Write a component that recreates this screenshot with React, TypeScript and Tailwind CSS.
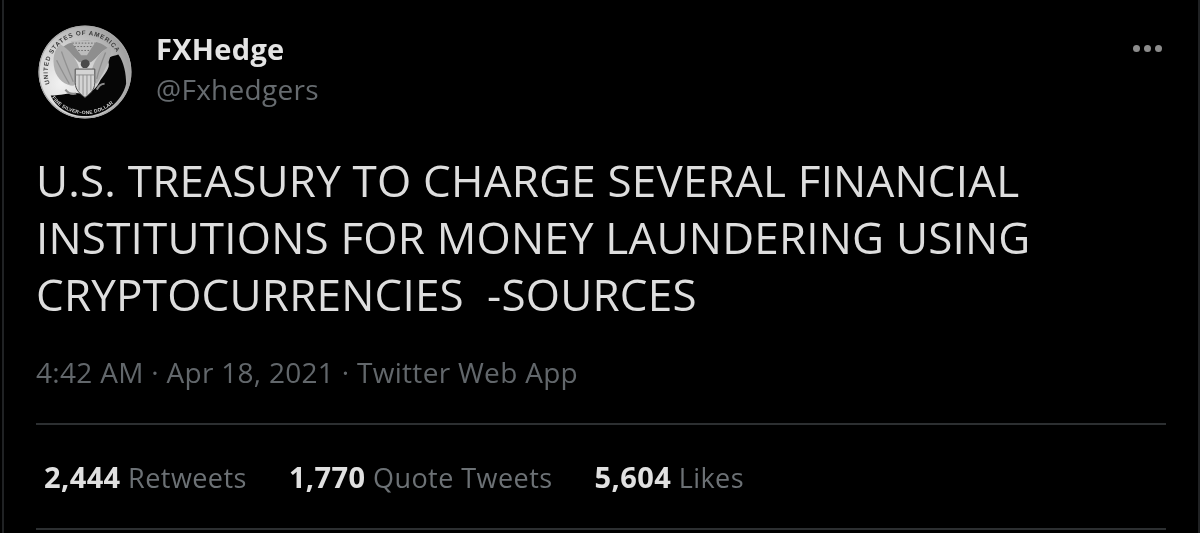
import React from "react";

function Coin() {
  return (
    <svg viewBox="0 0 96 96" className="w-[94px] h-[94px] shrink-0 blur-[0.5px]">
      <defs>
        <path id="topArc" d="M 13.5 64 A 38 38 0 1 1 82.5 64" />
        <path id="botArc" d="M 12.3 72 A 43 43 0 0 0 83.7 72" />
        <radialGradient id="field" cx="25%" cy="62%" r="75%">
          <stop offset="0%" stopColor="#f2f2f2" />
          <stop offset="55%" stopColor="#d0d0d0" />
          <stop offset="100%" stopColor="#a2a2a2" />
        </radialGradient>
      </defs>
      <circle cx="48" cy="48" r="47.5" fill="url(#field)" />
      {/* grey upper field behind the stars */}
      <path d="M24 24 C 32 14 60 12 72 24 C 66 24 60 34 54 38 H 42 C 36 32 30 26 24 24 Z" fill="#8e8e8e" />
      {/* black shadow sweeping over the coin */}
      <path d="M 82 30 C 76 32 70 32 72 38 C 74 44 68 50 64 56 C 60 64 56 70 44 70 C 34 68 26 72 13 72 C 18 84 32 93 48 93 C 68 93 86 78 90 60 C 90 50 88 38 82 30 Z" fill="#060606" />
      <circle cx="48" cy="48" r="46.8" fill="none" stroke="#a8a8a8" strokeWidth="1.1" />
      <text fontSize="6.4" fontWeight="700" fill="#3a3a3a" fontFamily="Liberation Sans, sans-serif" letterSpacing="0.8">
        <textPath href="#topArc" startOffset="4">UNITED STATES OF AMERICA</textPath>
      </text>
      <text fontSize="5" fontWeight="700" fill="#d6d6d6" fontFamily="Liberation Sans, sans-serif" letterSpacing="0.2">
        <textPath href="#botArc" startOffset="3">FINE SILVER~ONE DOLLAR</textPath>
      </text>
      {/* stars */}
      <path d="M33 16 H60 L55 23 L50 31 H44 L38 23 Z" fill="#bcbcbc" />
      <path d="M35 18.5 H58 M37 22 H56 M41 26 H53" stroke="#6a6a6a" strokeWidth="1" strokeDasharray="1.6 1.6" />
      {/* wings */}
      <path d="M17 46 C 14 34 17 24 23 20 C 31 24 39 34 42 44 C 44 54 40 60 36 62 C 28 62 20 56 17 46 Z" fill="#b0b0b0" />
      <path d="M24 27 C 27 36 31 46 36 58 M19 36 C 23 44 27 52 32 60" stroke="#919191" strokeWidth="1.3" fill="none" />
      <path d="M74 22 C 66 25 58 34 55 46 C 54 54 56 58 60 60 C 63 56 66 50 69 44 C 72 38 76 30 74 22 Z" fill="#aeaeae" />
      <path d="M69 28 C 65 38 62 46 60 55" stroke="#8c8c8c" strokeWidth="1.3" fill="none" />
      {/* head */}
      <path d="M44 38 C 45 35 50 34 52 37 C 54 40 52 42 50 44 L 46 44 C 44 42 43 41 44 38 Z" fill="#4a4a4a" />
      {/* shield */}
      <path d="M38 45 H58 V59 C 58 67 52 71 48 74 C 44 71 38 67 38 59 Z" fill="#d4d4d4" stroke="#4e4e4e" strokeWidth="1" />
      <path d="M38 51 H58 M42 51 V67 M46 51 V72 M50 51 V72 M54 51 V67" stroke="#8a8a8a" strokeWidth="0.9" />
      {/* talons and branch */}
      <path d="M28 66 C 31 70 35 71 39 70 M60 66 C 62 62 65 60 68 60" stroke="#8c8c8c" strokeWidth="2.2" fill="none" />
    </svg>
  );
}

function Stat({ n, label }: { n: string; label: string }) {
  return (
    <span className="whitespace-nowrap">
      <span className="font-bold text-[29px] tracking-[0.4px] text-[#e0e0e0]">{n}</span>
      <span className="text-[#6c7175] tracking-[0.45px]"> {label}</span>
    </span>
  );
}

export default function App() {
  return (
    <div
      className="relative w-[1200px] h-[533px] overflow-hidden bg-black pl-[36px] pr-[34px] pt-[25px]"
      style={{ fontFamily: '"Open Sans", "Noto Sans", sans-serif' }}
    >
      <div className="flex items-start h-[94px]">
        <div className="ml-[2px]">
          <Coin />
        </div>
        <div className="ml-[24px] flex flex-col blur-[0.4px]">
          <div className="text-[29px] leading-[36px] mt-[6px] font-bold text-[#e4e4e4] tracking-[0.3px]">FXHedge</div>
          <div className="text-[28px] leading-[36px] mt-[4px] text-[#666b6f] tracking-[0.3px]">@Fxhedgers</div>
        </div>
        <div className="ml-auto mr-[4px] mt-[20px] flex gap-[4px] blur-[0.5px]">
          <span className="w-[7px] h-[7px] rounded-full bg-[#8c8c8c]" />
          <span className="w-[7px] h-[7px] rounded-full bg-[#8c8c8c]" />
          <span className="w-[7px] h-[7px] rounded-full bg-[#8c8c8c]" />
        </div>
      </div>

      <div className="mt-[33px] text-[44px] leading-[57px] text-[#dedede] tracking-[0.2px] whitespace-pre blur-[0.4px]">
        {"U.S. TREASURY TO CHARGE SEVERAL FINANCIAL\nINSTITUTIONS FOR MONEY LAUNDERING USING\nCRYPTOCURRENCIES  -SOURCES"}
      </div>

      <div className="mt-[30px] text-[28px] leading-[38px] text-[#62676b] tracking-[0.3px] blur-[0.4px]">
        4:42 AM · Apr 18, 2021 · Twitter Web App
      </div>

      <div className="mt-[32px] h-[2px] bg-[#2c2f31]" />

      <div className="flex gap-[42px] pl-[8px] pt-[33px] text-[27px] leading-[38px] h-[103px] blur-[0.4px]">
        <Stat n="2,444" label="Retweets" />
        <Stat n="1,770" label="Quote Tweets" />
        <Stat n="5,604" label="Likes" />
      </div>

      <div className="h-[2px] bg-[#2c2f31]" />

      {/* window edges */}
      <div className="absolute left-[2px] top-0 bottom-0 w-[2px] bg-[#202224]" />
      <div className="absolute right-0 top-0 bottom-0 w-[2px] bg-[#202224]" />
    </div>
  );
}
